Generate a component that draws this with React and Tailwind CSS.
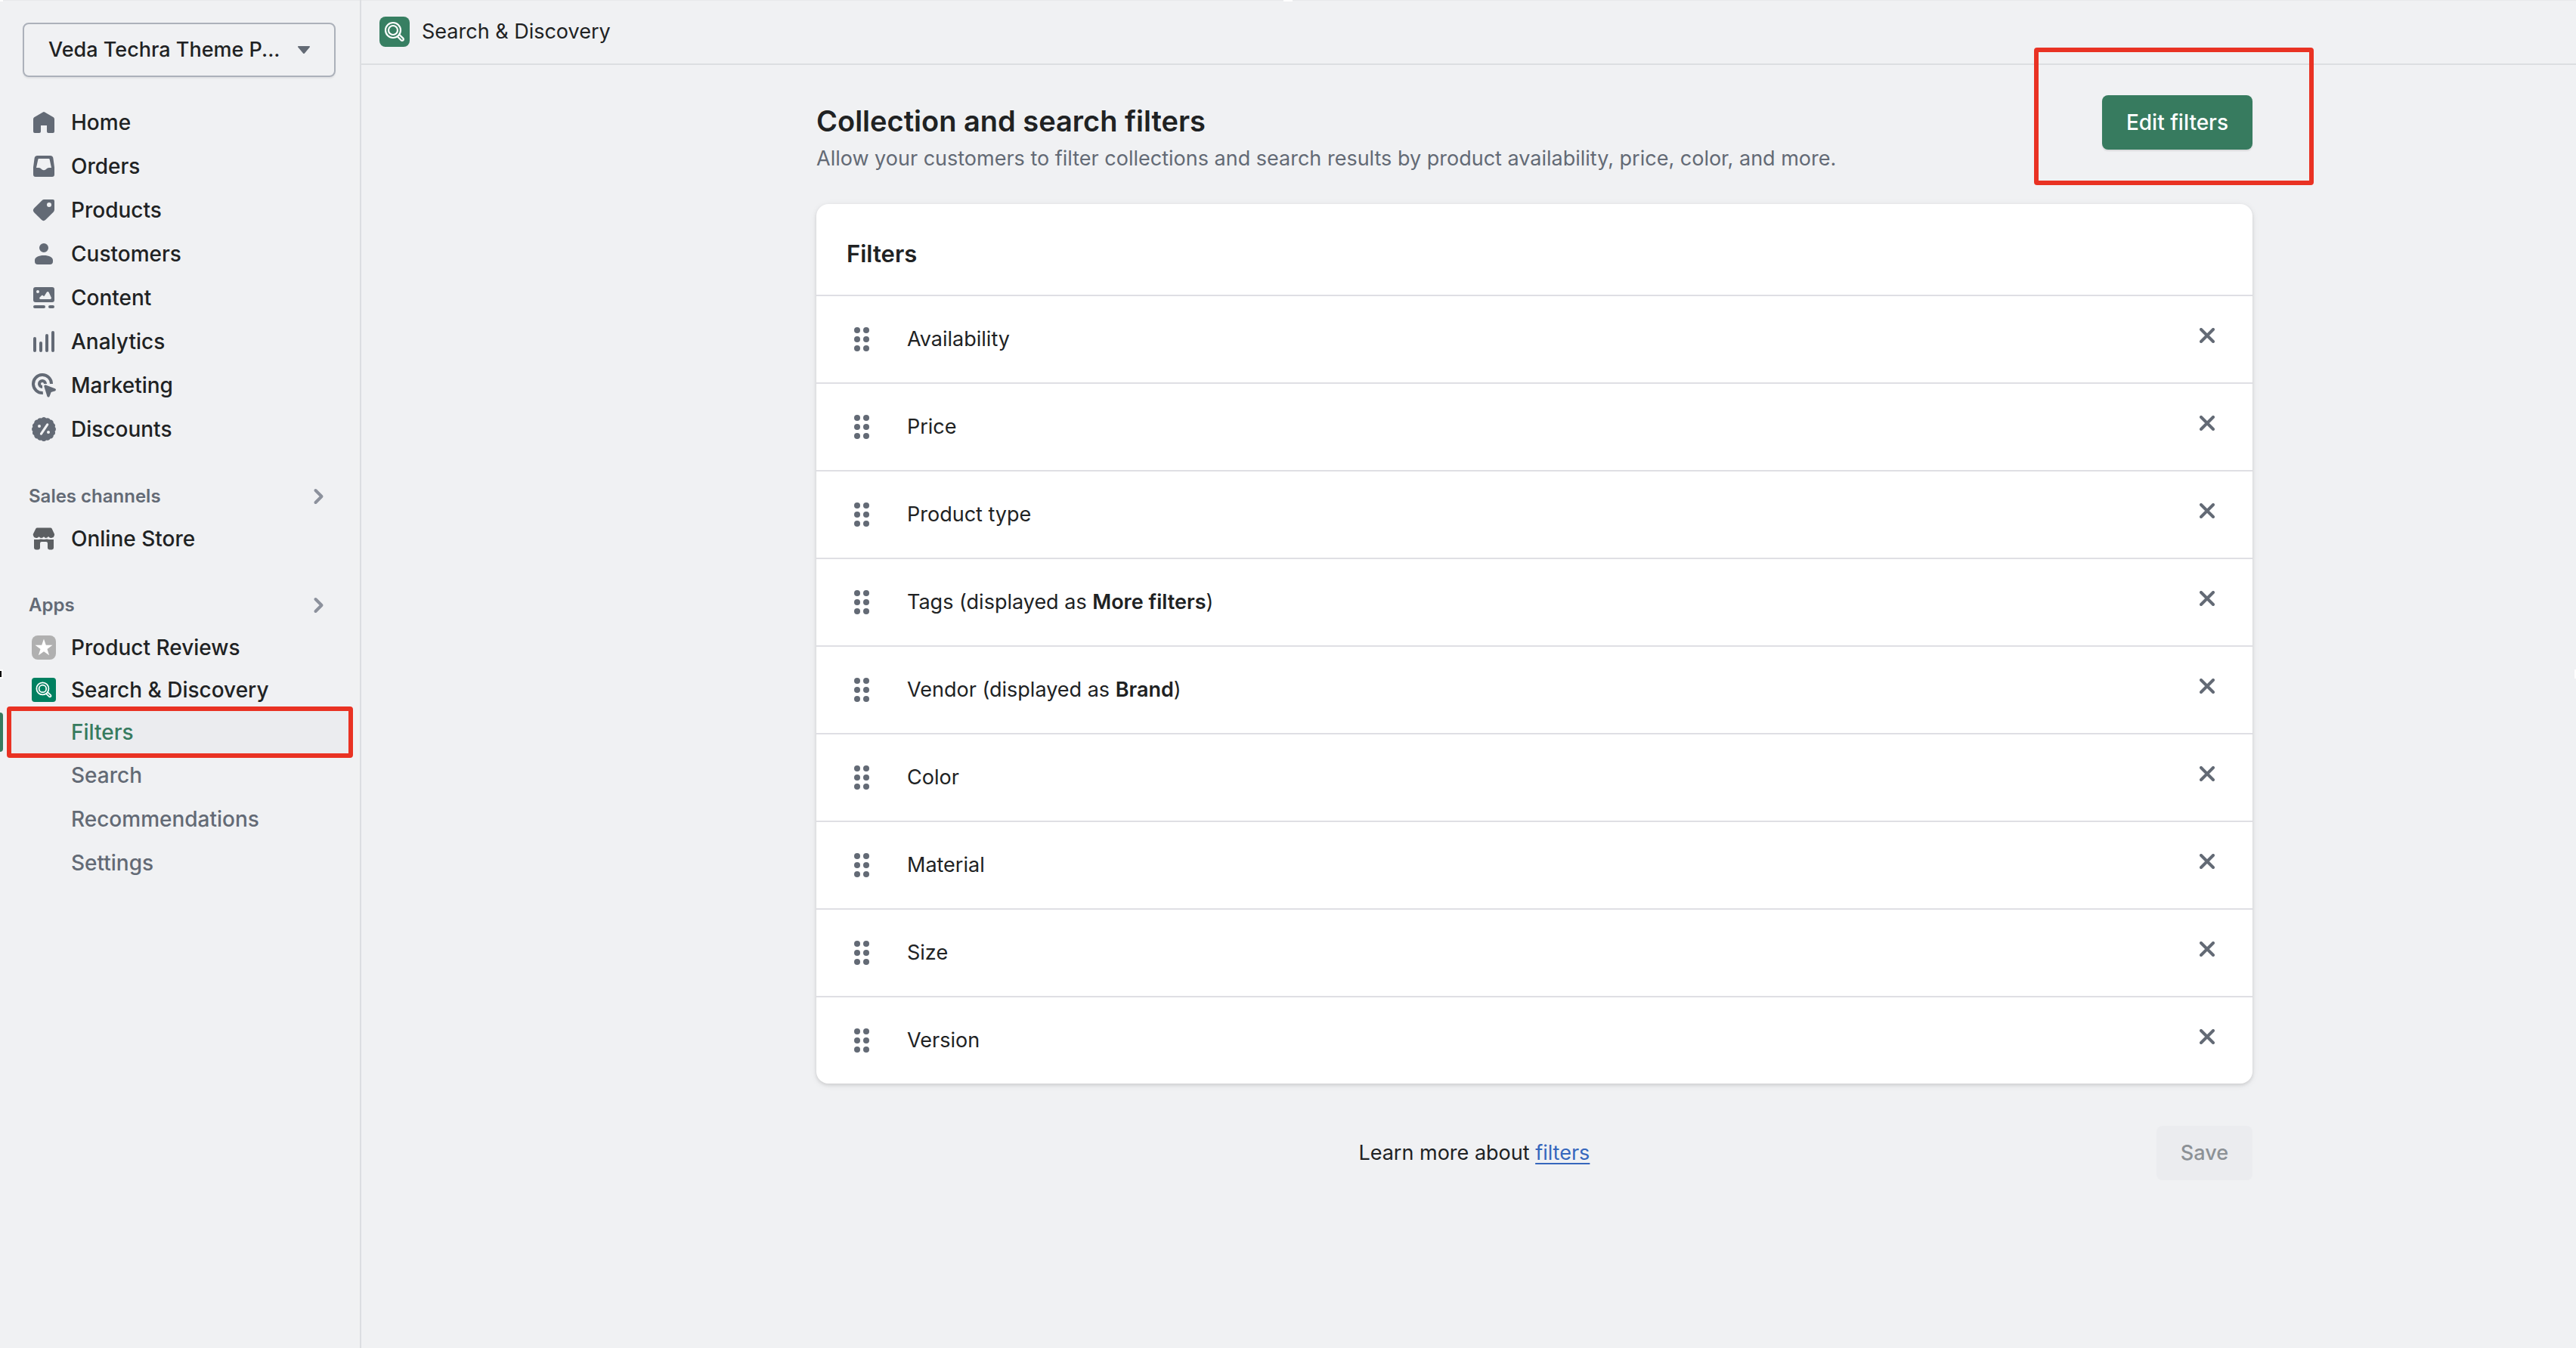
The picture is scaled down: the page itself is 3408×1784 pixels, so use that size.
const ICON = {
  home: (
    <path d="M9.4 3.2a1.1 1.1 0 0 1 1.2 0l5.6 3.3c.5.3.8.8.8 1.4V16a1 1 0 0 1-1 1h-3a1 1 0 0 1-1-1v-4H8v4a1 1 0 0 1-1 1H4a1 1 0 0 1-1-1V7.9c0-.6.3-1.1.8-1.4z" />
  ),
  orders: (
    <path fillRule="evenodd" d="M3.8 4.8A2 2 0 0 1 5.8 3h8.4a2 2 0 0 1 2 1.8l.8 6V15.500a1.500 1.500 0 0 1-1.500 1.500h-11A1.500 1.500 0 0 1 3 15.500v-4.700zM6.200 5.400a.5.5 0 0 1 .5-.4h6.600a.5.5 0 0 1 .5.4L15 11h-1.600a2 2 0 0 0-1.200.4l-.9.700a2 2 0 0 1-2.600 0l-.9-.7A2 2 0 0 0 6.600 11H5z" />
  ),
  products: (
    <path fillRule="evenodd" d="M10.200 3a2 2 0 0 0-1.400.600l-5.200 5.200a2 2 0 0 0 0 2.800l4.800 4.800a2 2 0 0 0 2.800 0l5.200-5.200a2 2 0 0 0 .600-1.400V4a1 1 0 0 0-1-1zM13.500 8a1.500 1.500 0 1 0 0-3 1.500 1.500 0 0 0 0 3z" />
  ),
  customers: (
    <path d="M10 9a3 3 0 1 0 0-6 3 3 0 0 0 0 6zM4 14.300C4 12.200 6.500 11 10 11s6 1.200 6 3.300V15a2 2 0 0 1-2 2H6a2 2 0 0 1-2-2z" />
  ),
  content: (
    <>
      <path fillRule="evenodd" d="M4.500 3h11A1.500 1.500 0 0 1 17 4.500v7a1.500 1.500 0 0 1-1.500 1.500h-11A1.500 1.500 0 0 1 3 11.500v-7A1.500 1.500 0 0 1 4.500 3zM6 7a1 1 0 1 0 0-2 1 1 0 0 0 0 2zM7.800 11h6.400c.6 0 .9-.6.700-1.100L13.400 6.600c-.3-.7-1.200-.8-1.600-.1l-1.400 2.300a.4.4 0 0 1-.6.100l-.300-.300c-.4-.3-.9-.3-1.200.1L7.200 9.900c-.3.500 0 1.100.6 1.100z" />
      <rect x="3" y="15" width="8" height="2" rx="1" />
      <rect x="13" y="15" width="4" height="2" rx="1" />
    </>
  ),
  analytics: (
    <>
      <rect x="3" y="7" width="2" height="10" rx="1" />
      <rect x="7" y="10" width="2" height="7" rx="1" />
      <rect x="11" y="5" width="2" height="12" rx="1" />
      <rect x="15" y="3" width="2" height="14" rx="1" />
    </>
  ),
  marketing: (
    <>
      <path fill="none" stroke="currentColor" strokeWidth="2" d="M15 9a6 6 0 1 0-5.600 5.980" />
      <path fill="none" stroke="currentColor" strokeWidth="2" d="M11 9a2 2 0 1 0-2 2" />
      <path d="M10.200 10.800c-.2-.6.300-1.200 1-1l6.200 2.300c.8.300.8 1.300 0 1.600l-2.200.7c-.300.100-.4.200-.5.500l-.9 2.400c-.3.800-1.300.8-1.600 0z" />
    </>
  ),
  discounts: (
    <path fillRule="evenodd" d="M11.570 2.770a2 2 0 0 0-3.140 0 2 2 0 0 0-2.680 1.020 2 2 0 0 0-2.160 2.160A2 2 0 0 0 2.700 8.500a2 2 0 0 0 0 3 2 2 0 0 0 .89 2.550 2 2 0 0 0 2.160 2.160 2 2 0 0 0 2.680 1.020 2 2 0 0 0 3.140 0 2 2 0 0 0 2.680-1.020 2 2 0 0 0 2.160-2.160 2 2 0 0 0 .89-2.550 2 2 0 0 0 0-3 2 2 0 0 0-.89-2.550 2 2 0 0 0-2.160-2.160 2 2 0 0 0-2.680-1.020zM7 9a1 1 0 1 0 0-2 1 1 0 0 0 0 2zm6 4a1 1 0 1 0 0-2 1 1 0 0 0 0 2zm-.200-6.700a.8.8 0 0 0-1.100.2l-4.200 6.200a.8.8 0 0 0 1.300.9L13 7.400a.8.8 0 0 0-.200-1.100z" />
  ),
  store: (
    <>
      <path d="M4.700 3.300c.2-.4.500-.6.900-.6h8.800c.4 0 .7.200.9.600l1.500 3.200c.2.400.3.700.2 1.100a2.200 2.200 0 0 1-4 .9 2.200 2.200 0 0 1-1.800 1A2.200 2.200 0 0 1 10 8.600a2.200 2.200 0 0 1-1.700.9 2.200 2.200 0 0 1-1.500-.9 2.200 2.200 0 0 1-3.900-1c-.1-.4 0-.7.2-1.100z" />
      <path d="M3.500 10.500h3l1.500-.300 2 .300 2-.300 1.500.300h3V16a1.200 1.200 0 0 1-1.200 1.200h-1.600a1.200 1.200 0 0 1-1.200-1.200v-3a1 1 0 0 0-1-1h-3a1 1 0 0 0-1 1v3a1.200 1.200 0 0 1-1.200 1.200H4.700A1.200 1.200 0 0 1 3.500 16z" />
    </>
  ),
};

const Icon = ({ name, color = "text-[#636a75]" }) => (
  <svg viewBox="0 0 20 20" fill="currentColor" aria-hidden="true" className={`size-10 shrink-0 ${color}`}>
    {ICON[name]}
  </svg>
);

const Magnifier = ({ className }) => (
  <svg viewBox="0 0 40 40" fill="none" stroke="#fff" aria-hidden="true" className={className}>
    <circle cx="18" cy="18" r="10" strokeWidth="2.200" />
    <circle cx="18" cy="18" r="6" strokeWidth="2.200" />
    <path d="M24.500 27l4.200 4.200a1.800 1.800 0 0 0 2.600-2.600L27 24.500" strokeWidth="2.200" strokeLinecap="round" strokeLinejoin="round" />
  </svg>
);

const Star = () => (
  <span className="mx-1 flex size-8 shrink-0 items-center justify-center rounded-lg bg-[#b0b0b0]">
    <svg viewBox="0 0 24 24" fill="#fff" aria-hidden="true" className="size-6">
      <path d="M12 0.500l2.800 8.200h8.700l-7 5.200 2.600 8.400L12 17.200l-7.100 5.100 2.600-8.400-7-5.200h8.700z" />
    </svg>
  </span>
);

const MAIN_NAV = [
  ["Home", "home"],
  ["Orders", "orders"],
  ["Products", "products"],
  ["Customers", "customers"],
  ["Content", "content"],
  ["Analytics", "analytics"],
  ["Marketing", "marketing"],
  ["Discounts", "discounts"],
];

const FILTERS = [
  { label: "Availability" },
  { label: "Price" },
  { label: "Product type" },
  { label: "Tags", alias: "More filters" },
  { label: "Vendor", alias: "Brand" },
  { label: "Color" },
  { label: "Material" },
  { label: "Size" },
  { label: "Version" },
];

const NavItem = ({ label, icon, height = "h-[58px]" }) => (
  <a href="#" className={`flex items-center gap-4 pl-[38px] font-medium ${height}`}>
    {icon}
    {label}
  </a>
);

const SectionToggle = ({ label }) => (
  <button type="button" className="flex h-14 w-full items-center justify-between pr-[46px] pl-[38px] text-2xl font-semibold text-[#636a75]">
    {label}
    <svg viewBox="0 0 16 24" fill="none" stroke="#8c919c" strokeWidth="4" strokeLinecap="round" strokeLinejoin="round" aria-hidden="true" className="h-6 w-4">
      <path d="M3.500 4l8 8-8 8" />
    </svg>
  </button>
);

const SubItem = ({ label }) => (
  <a href="#" className="flex h-[58px] items-center pl-[94px] font-medium text-[#636a75]">
    {label}
  </a>
);

const Sidebar = () => (
  <aside className="w-[478px] shrink-0 border-r-2 border-[#dcdee1] pt-[30px]">
    <div className="pr-8 pl-[30px]">
      <button type="button" className="flex h-[72px] w-full items-center justify-between rounded-lg border-2 border-[#acb1ba] pr-8 pl-8 text-[27px] font-medium shadow-[0_2px_2px_rgba(0,0,0,0.06)]">
        <span className="truncate">Veda Techra Theme P...</span>
        <svg viewBox="0 0 16 10" fill="#636a75" aria-hidden="true" className="h-[10px] w-4 shrink-0">
          <path d="M1 0h14c.9 0 1.300 1 .700 1.600L9 9.400a1.400 1.400 0 0 1-2 0L.3 1.600C-.3 1 .1 0 1 0z" />
        </svg>
      </button>
    </div>
    <nav aria-label="Main" className="pt-[31px]">
      {MAIN_NAV.map(([label, icon]) => (
        <NavItem key={label} label={label} icon={<Icon name={icon} />} />
      ))}
      <div className="pt-8">
        <SectionToggle label="Sales channels" />
        <NavItem label="Online Store" height="h-14" icon={<Icon name="store" color="text-[#5c5f62]" />} />
      </div>
      <div className="pt-8">
        <SectionToggle label="Apps" />
        <NavItem label="Product Reviews" height="h-14" icon={<Star />} />
        <NavItem
          label="Search & Discovery"
          height="h-14"
          icon={
            <span className="mx-1 size-8 shrink-0 rounded-sm bg-[#008060]">
              <Magnifier className="size-8" />
            </span>
          }
        />
        <div className="flex h-14 items-center">
          <span className="h-[52px] w-1 shrink-0 rounded-r-sm bg-[#377b5f]" />
          <a href="#" aria-current="page" className="relative mr-[10px] ml-[6px] flex h-14 flex-1 items-center rounded-lg bg-[#ebecef] pl-[84px] font-medium text-[#377b5f]">
            Filters
            <span className="absolute -inset-x-px -inset-y-[6px] rounded-sm border-6 border-[#e93223]" />
          </a>
        </div>
        <SubItem label="Search" />
        <SubItem label="Recommendations" />
        <SubItem label="Settings" />
      </div>
    </nav>
  </aside>
);

const FilterRow = ({ label, alias }) => (
  <li className="flex h-[116px] items-center border-t-2 border-[#dfdfe4] pr-10 pl-10">
    <button type="button" aria-label={`Reorder ${label}`} className="flex size-10 items-center justify-center">
      <svg viewBox="0 0 20 32" fill="#636a75" aria-hidden="true" className="h-8 w-5">
        {[4, 16, 28].map((y) => (
          <g key={y}>
            <circle cx="4" cy={y} r="4" />
            <circle cx="16" cy={y} r="4" />
          </g>
        ))}
      </svg>
    </button>
    <span className="flex-1 pl-10">
      {label}
      {alias && (
        <>
          {" (displayed as "}
          <strong className="font-semibold">{alias}</strong>)
        </>
      )}
    </span>
    <button type="button" aria-label={`Remove ${label}`} className="mb-[10px] flex size-10 items-center justify-center">
      <svg viewBox="0 0 20 20" stroke="#636a75" strokeWidth="4" strokeLinecap="round" aria-hidden="true" className="size-5">
        <path d="M2 2l16 16M18 2L2 18" />
      </svg>
    </button>
  </li>
);

/* Resize handles that sit on the edges of the captured window. */
const EdgeHandles = () => (
  <div aria-hidden="true" className="pointer-events-none absolute inset-0 overflow-hidden">
    <span className="absolute top-0 left-0 h-0.5 w-1 bg-white" />
    <span className="absolute top-0 left-1/2 h-0.5 w-3 -translate-x-1/2 bg-white" />
    <span className="absolute top-1/2 right-0 h-3 w-0.5 -translate-y-1/2 bg-white" />
    <span className="absolute top-1/2 left-0 h-3 w-1 -translate-y-1/2 border-y-2 border-r-2 border-white bg-black" />
  </div>
);

export default function App() {
  return (
    <div className="relative flex min-h-screen bg-[#f0f1f3] font-['Inter',sans-serif] text-[28px] leading-10 text-[#202223] shadow-[inset_0_1px_0_#e8e9eb]">
      <Sidebar />
      <div className="min-w-0 flex-1 text-[27px]">
        <header className="flex h-[86px] items-center gap-4 border-b-2 border-[#dcdee1] pl-6">
          <span className="size-10 rounded-lg bg-[#377f62]">
            <Magnifier className="size-10" />
          </span>
          <span>Search &amp; Discovery</span>
        </header>
        <main className="pl-[174px]">
          <div className="mx-auto max-w-[1900px] pt-10">
            <div className="flex items-start justify-between">
              <div className="pt-3">
                <h1 className="text-[38px] leading-[44px] font-semibold">Collection and search filters</h1>
                <p className="pt-2 text-[#636a75]">
                  Allow your customers to filter collections and search results by product availability, price, color, and more.
                </p>
              </div>
              <div className="relative">
                <button type="button" className="h-[72px] rounded-lg bg-[#377b5f] px-8 text-[28px] font-medium text-white shadow-[0_2px_2px_rgba(0,0,0,0.1)]">
                  Edit filters
                </button>
                <span className="pointer-events-none absolute -top-[63px] -right-[81px] -bottom-[47px] -left-[90px] rounded-sm border-6 border-[#e93223]" />
              </div>
            </div>
            <section className="mt-10 overflow-hidden rounded-2xl bg-white shadow-[0_2px_10px_rgba(23,24,24,0.08),0_2px_4px_rgba(0,0,0,0.1)]">
              <h2 className="px-10 pt-[46px] pb-[34px] text-[31px] leading-10 font-semibold">Filters</h2>
              <ul>
                {FILTERS.map((f) => (
                  <FilterRow key={f.label} {...f} />
                ))}
              </ul>
            </section>
            <footer className="flex items-center gap-8 pt-14">
              <p className="flex-1 text-center">
                Learn more about{" "}
                <a href="#" className="text-[#3667bd] underline decoration-2 underline-offset-4">
                  filters
                </a>
              </p>
              <button type="button" disabled className="h-[72px] rounded-lg bg-[#ebecef] px-8 font-medium text-[#8c9196]">
                Save
              </button>
            </footer>
          </div>
        </main>
      </div>
      <EdgeHandles />
    </div>
  );
}
